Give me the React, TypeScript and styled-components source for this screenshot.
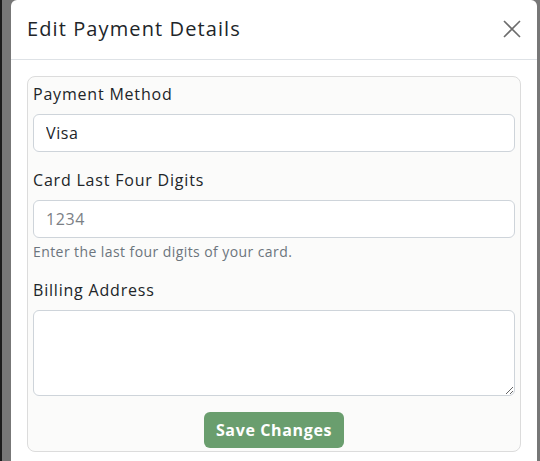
import React from "react";
import styled, { createGlobalStyle } from "styled-components";

const GlobalStyle = createGlobalStyle`
  html, body {
    margin: 0;
    padding: 0;
    height: 100%;
    overflow: hidden;
  }
  body {
    font-family: "Open Sans", "Liberation Sans", sans-serif;
    color: #212529;
    background: #777777;
  }
  * {
    box-sizing: border-box;
  }
`;

const Page = styled.div`
  display: flex;
  height: 461px;
`;

const EdgeStrip = styled.div`
  width: 2px;
  background: #1c1c1c;
`;

const Backdrop = styled.div`
  flex: 1;
  background: #777777;
  padding: 0 3px 0 9px;
`;

const Modal = styled.div`
  background: #ffffff;
  border-radius: 6px 6px 0 0;
  min-height: 100%;
`;

const Header = styled.div`
  height: 60px;
  display: flex;
  align-items: center;
  justify-content: space-between;
  padding: 0 16px 2px;
  border-bottom: 1px solid #dee2e6;
`;

const Title = styled.h5`
  margin: 0;
  font-size: 20px;
  font-weight: 400;
  line-height: 1;
  letter-spacing: 0.055em;
  color: #212529;
`;

const CloseButton = styled.button`
  border: none;
  background: none;
  padding: 0;
  width: 18px;
  height: 18px;
  cursor: pointer;
  display: flex;
`;

const Body = styled.div`
  padding: 16px;
`;

const Card = styled.form`
  background: #fbfbfa;
  border: 1px solid #dcdcdc;
  border-radius: 8px;
  padding: 5px 5px 3px;
  display: flex;
  flex-direction: column;
`;

const Field = styled.div`
  margin-bottom: 16px;
`;

const Label = styled.label`
  display: block;
  font-size: 16px;
  line-height: 24px;
  letter-spacing: 0.05em;
  margin-bottom: 8px;
`;

const Input = styled.input`
  display: block;
  width: 100%;
  height: 38px;
  padding: 6px 12px;
  font-family: inherit;
  font-size: 16px;
  letter-spacing: 0.04em;
  color: #212529;
  background: #ffffff;
  border: 1px solid #ced4da;
  border-radius: 6px;
  outline: none;

  &::placeholder {
    color: #7b8085;
  }
`;

const TextArea = styled.textarea`
  display: block;
  width: 100%;
  height: 86px;
  padding: 6px 12px;
  font-family: inherit;
  font-size: 16px;
  background: #ffffff;
  border: 1px solid #ced4da;
  border-radius: 6px;
  outline: none;
`;

const HelpText = styled.div`
  margin-top: 4px;
  font-size: 14px;
  line-height: 20px;
  letter-spacing: 0.03em;
  color: #6c757d;
`;

const SaveButton = styled.button`
  align-self: center;
  height: 36px;
  padding: 0 12px;
  border: none;
  border-radius: 6px;
  background: #6a9e6e;
  color: #ffffff;
  font-family: inherit;
  font-size: 16px;
  font-weight: 700;
  letter-spacing: 0.04em;
  cursor: pointer;
`;

const App = () => {
  return (
    <>
      <GlobalStyle />
      <Page>
        <EdgeStrip />
        <Backdrop>
          <Modal>
            <Header>
              <Title>Edit Payment Details</Title>
              <CloseButton aria-label="Close">
                <svg width="18" height="18" viewBox="0 0 18 18">
                  <path d="M1 1 L17 17 M17 1 L1 17" stroke="#6c6c6c" strokeWidth="1.6" />
                </svg>
              </CloseButton>
            </Header>
            <Body>
              <Card>
                <Field>
                  <Label>Payment Method</Label>
                  <Input defaultValue="Visa" />
                </Field>
                <Field>
                  <Label>Card Last Four Digits</Label>
                  <Input placeholder="1234" />
                  <HelpText>Enter the last four digits of your card.</HelpText>
                </Field>
                <Field>
                  <Label>Billing Address</Label>
                  <TextArea />
                </Field>
                <SaveButton type="button">Save Changes</SaveButton>
              </Card>
            </Body>
          </Modal>
        </Backdrop>
      </Page>
    </>
  );
};

export default App;
